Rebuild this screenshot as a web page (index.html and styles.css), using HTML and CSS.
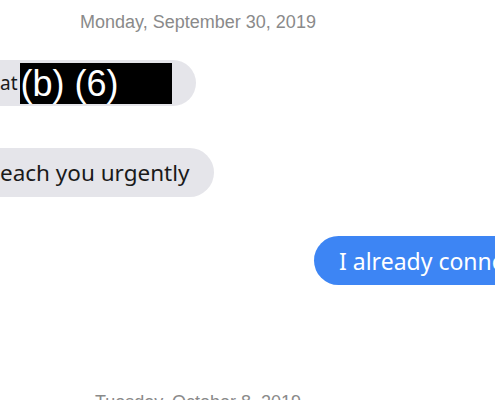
FILE: index.html
```html
<!DOCTYPE html>
<html>
<head>
<meta charset="utf-8">
<link rel="stylesheet" href="styles.css">
</head>
<body>
<div class="thread">
  <div class="date date-first">Monday, September 30, 2019</div>
  <div class="row">
    <div class="bubble in in-first"><span class="small">at</span><span class="redact">(b) (6)</span></div>
  </div>
  <div class="row">
    <div class="bubble in in-second">each you urgently</div>
  </div>
  <div class="row">
    <div class="bubble out">I already connected with them</div>
  </div>
  <div class="date date-last">Tuesday, October 8, 2019</div>
</div>
</body>
</html>
```
FILE: styles.css
```css
html, body {
  margin: 0;
  padding: 0;
  background: #ffffff;
  overflow: hidden;
}
.thread {
  width: 495px;
  height: 400px;
  overflow: hidden;
  display: flex;
  flex-direction: column;
  align-items: flex-start;
}
.date {
  width: 396px;
  text-align: center;
  font-family: "Liberation Sans", Arial, sans-serif;
  font-size: 18px;
  line-height: 20px;
  color: #8a8a8a;
  white-space: nowrap;
}
.date-first {
  margin-top: 12px;
}
.date-last {
  margin-top: 107px;
}
.row {
  display: flex;
  white-space: nowrap;
}
.bubble {
  display: flex;
  align-items: center;
  font-family: "Noto Sans", "Open Sans", sans-serif;
  font-size: 23px;
  white-space: nowrap;
}
.in {
  background: #e5e5ea;
  color: #1a1a1a;
  margin-left: -24px;
  padding-left: 24px;
}
.in-first {
  margin-top: 28px;
  height: 46px;
  border-radius: 23px;
  padding-right: 24px;
}
.small {
  font-size: 19px;
  margin-right: 2px;
}
.redact {
  background: #000;
  color: #fff;
  font-family: "Liberation Sans", Arial, sans-serif;
  font-size: 36px;
  line-height: 41px;
  height: 41px;
  width: 152px;
  padding-left: 1px;
  box-sizing: border-box;
}
.in-second {
  margin-top: 42px;
  height: 49px;
  border-radius: 25px;
  padding-right: 24px;
  font-size: 22.5px;
}
.out {
  margin-top: 39px;
  margin-left: 314px;
  height: 49px;
  border-radius: 25px;
  background: #3d85f4;
  color: #ffffff;
  padding: 0 25px;
}
```
